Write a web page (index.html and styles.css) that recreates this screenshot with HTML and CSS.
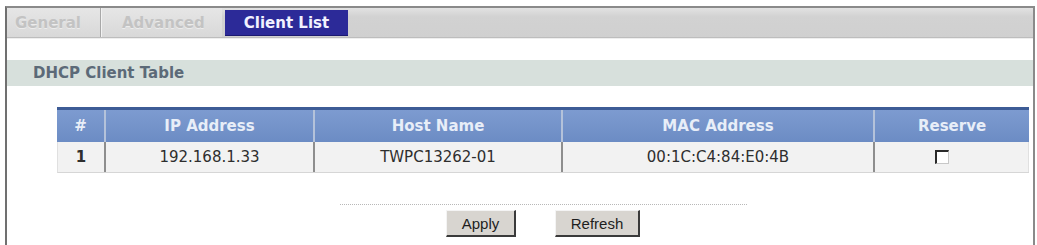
FILE: index.html
```html
<!DOCTYPE html>
<html>
<head>
<meta charset="utf-8">
<link rel="stylesheet" href="styles.css">
</head>
<body>
<div class="frame">
  <div class="tabs">
    <div class="tab tab-general">General</div>
    <div class="tab-sep"></div>
    <div class="tab tab-advanced">Advanced</div>
    <div class="tab tab-active">Client List</div>
  </div>
  <div class="section-title">DHCP Client Table</div>
  <div class="table">
    <div class="row head">
      <div class="cell c-num">#</div>
      <div class="cell c-ip">IP Address</div>
      <div class="cell c-host">Host Name</div>
      <div class="cell c-mac">MAC Address</div>
      <div class="cell c-res">Reserve</div>
    </div>
    <div class="row data">
      <div class="cell c-num num">1</div>
      <div class="cell c-ip">192.168.1.33</div>
      <div class="cell c-host">TWPC13262-01</div>
      <div class="cell c-mac">00:1C:C4:84:E0:4B</div>
      <div class="cell c-res"><span class="checkbox"></span></div>
    </div>
  </div>
  <div class="footer">
    <div class="dots"></div>
    <div class="buttons">
      <button class="btn btn-apply">Apply</button>
      <button class="btn btn-refresh">Refresh</button>
    </div>
  </div>
</div>
</body>
</html>
```

FILE: styles.css
```css
html, body {
  margin: 0;
  padding: 0;
  background: #ffffff;
}

.frame {
  box-sizing: border-box;
  margin-top: 6px;
  margin-left: 5px;
  width: 1030px;
  height: 239px;
  border-top: 2px solid #8a8a8a;
  border-left: 2px solid #707070;
  border-right: 2px solid #8a8a8a;
  font-family: "DejaVu Sans", Verdana, sans-serif;
}

.tabs {
  display: flex;
  align-items: stretch;
  height: 29px;
  background: linear-gradient(#e2e2e2, #d2d2d2 30%, #d0d0d0);
  border-bottom: 1px solid #bdbdbd;
  box-shadow: 0 1px 0 #eeeeee;
}

.tab {
  display: flex;
  align-items: center;
  font-size: 15px;
  font-weight: bold;
  color: #c3c3c3;
  text-shadow: 0 1px 0 #ececec;
}

.tab-general {
  width: 93px;
  padding-left: 8px;
  box-sizing: border-box;
  background: linear-gradient(#e6e6e6, #d8d8d8);
}

.tab-sep {
  width: 1px;
  background: #a8a8a8;
  border-right: 1px solid #f2f2f2;
}

.tab-advanced {
  width: 120px;
  padding-left: 20px;
  box-sizing: border-box;
  background: linear-gradient(#e6e6e6, #d8d8d8);
}

.tab-active {
  margin-left: 3px;
  margin-top: 2px;
  margin-bottom: 1px;
  width: 123px;
  justify-content: center;
  background: #2c2a98;
  color: #f2f2ff;
  text-shadow: none;
  border-bottom: 1px solid #1c1a70;
}

.section-title {
  margin-top: 22px;
  height: 26px;
  line-height: 26px;
  padding-left: 26px;
  background: #d7e0dc;
  font-size: 15px;
  font-weight: bold;
  color: #5c6a78;
}

.table {
  margin: 21px 0 0 50px;
  width: 972px;
}

.row {
  display: flex;
}

.cell {
  display: flex;
  align-items: center;
  justify-content: center;
  box-sizing: border-box;
  font-size: 15px;
}

.c-num { width: 49px; }
.c-ip { width: 209px; }
.c-host { width: 248px; }
.c-mac { width: 312px; }
.c-res { width: 154px; }

.head {
  height: 32px;
  border-top: 3px solid #3d5c96;
  background: linear-gradient(#7d9bd0, #6c8cc4);
}

.head .cell {
  font-weight: bold;
  color: #e8eef8;
  border-right: 2px solid #b4c2da;
}

.head .cell:last-child {
  border-right: none;
}

.data {
  height: 30px;
  background: #f2f2f2;
  border-bottom: 1px solid #d6d6d6;
  border-left: 1px solid #e0e0e0;
}

.data .cell {
  color: #2e2e2e;
  border-right: 2px solid #8e8e8e;
}

.data .cell:last-child {
  border-right: 1px solid #e0e0e0;
}

.data .c-num {
  width: 48px;
}

.num {
  font-weight: bold;
  color: #222;
}

.checkbox {
  display: block;
  width: 11px;
  height: 11px;
  margin-right: 20px;
  background: #ffffff;
  border-top: 2px solid #2a2a2a;
  border-left: 2px solid #2a2a2a;
  border-right: 1px solid #c8c8c8;
  border-bottom: 1px solid #c8c8c8;
}

.footer {
  margin-left: 50px;
  width: 972px;
  padding-top: 31px;
  display: flex;
  flex-direction: column;
  align-items: center;
}

.dots {
  width: 407px;
  border-top: 1px dotted #b8b8b8;
}

.buttons {
  display: flex;
  gap: 39px;
  margin-top: 5px;
}

.btn {
  height: 27px;
  padding: 0;
  font-family: "Liberation Sans", Arial, sans-serif;
  font-size: 15px;
  color: #1e1e1e;
  background: #d8d5d0;
  border-top: 1px solid #f4f4f4;
  border-left: 1px solid #f4f4f4;
  border-right: 2px solid #3a3a3a;
  border-bottom: 2px solid #3a3a3a;
  border-radius: 0;
}

.btn-apply { width: 70px; }
.btn-refresh { width: 85px; }
```
